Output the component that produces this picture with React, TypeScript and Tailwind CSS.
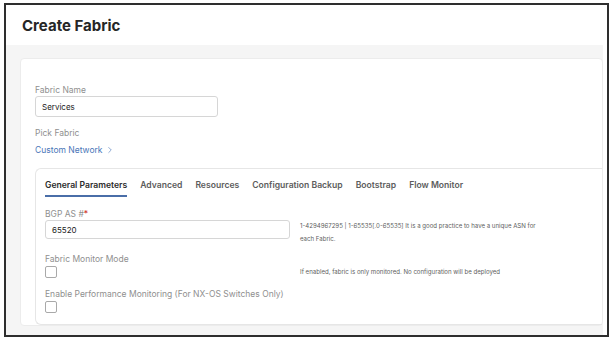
import { ChevronRight } from "lucide-react";

const font = { fontFamily: "Inter, 'Noto Sans', sans-serif" };

const TABS = [
  "General Parameters",
  "Advanced",
  "Resources",
  "Configuration Backup",
  "Bootstrap",
  "Flow Monitor",
];

const Checkbox = () => (
  <div className="w-[12px] h-[12px] rounded-[2px] border border-[#a9a9a9] bg-white" />
);

export default function App() {
  return (
    <div className="w-[612px] h-[340px] bg-white pt-[3px] pl-[4px]" style={font}>
      <div className="w-[605px] h-[334px] border-2 border-[#2e2e2e] flex flex-col bg-white">
        {/* page header */}
        <div className="h-[40px] shrink-0 pl-[16px] flex items-center pt-[3px]">
          <h1 className="text-[15px] font-bold text-[#262626]">Create Fabric</h1>
        </div>

        {/* content area */}
        <div className="flex-1 bg-[#f5f5f5] mr-[4px] pl-[14px] pt-[13px] pb-[9px] flex flex-col">
          <div className="flex-1 bg-white border border-[#ececec] rounded-[4px] pl-[14px] flex flex-col">
            <div className="mt-[25px] text-[8.5px] leading-[12px] text-[#8f8f8f]">Fabric Name</div>
            <div className="w-[183px] h-[21px] border border-[#d6d6d6] rounded-[3px] flex items-center pl-[6px] text-[8px] text-[#222]">
              Services
            </div>
            <div className="mt-[10px] text-[8.5px] leading-[12px] text-[#8f8f8f]">Pick Fabric</div>
            <div className="mt-[5px] flex items-center gap-[2px] text-[8.5px] leading-[12px] text-[#4a76b8]">
              <span>Custom Network</span>
              <ChevronRight size={10} strokeWidth={1.5} />
            </div>

            {/* tabbed panel */}
            <div className="mt-[12px] flex-1 border-l border-t border-b border-[#e6e6e6] rounded-l-[6px] pl-[9px] flex flex-col">
              <div className="flex gap-[13px] text-[8.6px] font-semibold">
                {TABS.map((t, i) => (
                  <div
                    key={t}
                    className={
                      i === 0
                        ? "pt-[10px] pb-[4px] leading-[12px] border-b-2 border-[#4a6ea8] text-[#2b2b2b]"
                        : "pt-[10px] pb-[4px] leading-[12px] border-b-2 border-transparent text-[#5c5c5c]"
                    }
                  >
                    {t}
                  </div>
                ))}
              </div>

              <div className="mt-[11px] grid grid-cols-[245px_1fr] gap-x-[10px]">
                <div className="text-[8.5px] leading-[12px] text-[#8f8f8f]">
                  BGP AS #<span className="text-[#d0342c]">*</span>
                </div>
                <div />
                <div className="h-[19px] border border-[#d6d6d6] rounded-[3px] flex items-center pl-[6px] text-[8px] text-[#222]">
                  65520
                </div>
                <div className="h-[19px] -mt-[1px] text-[6.1px] leading-[13px] text-[#606060] whitespace-nowrap">
                  1-4294967295 | 1-65535[.0-65535] It is a good practice to have a unique ASN for
                  <br />
                  each Fabric.
                </div>
              </div>

              <div className="mt-[14px] grid grid-cols-[245px_1fr] gap-x-[10px]">
                <div className="text-[8.5px] leading-[12px] text-[#8f8f8f]">Fabric Monitor Mode</div>
                <div />
                <div className="pt-[1px]">
                  <Checkbox />
                </div>
                <div className="text-[6.1px] leading-[13px] text-[#606060] flex items-center">
                  If enabled, fabric is only monitored. No configuration will be deployed
                </div>
              </div>

              <div className="mt-[10px] text-[8.5px] leading-[12px] text-[#8f8f8f]">
                Enable Performance Monitoring (For NX-OS Switches Only)
              </div>
              <div className="pt-[1px]">
                <Checkbox />
              </div>
            </div>
          </div>
        </div>
      </div>
    </div>
  );
}
